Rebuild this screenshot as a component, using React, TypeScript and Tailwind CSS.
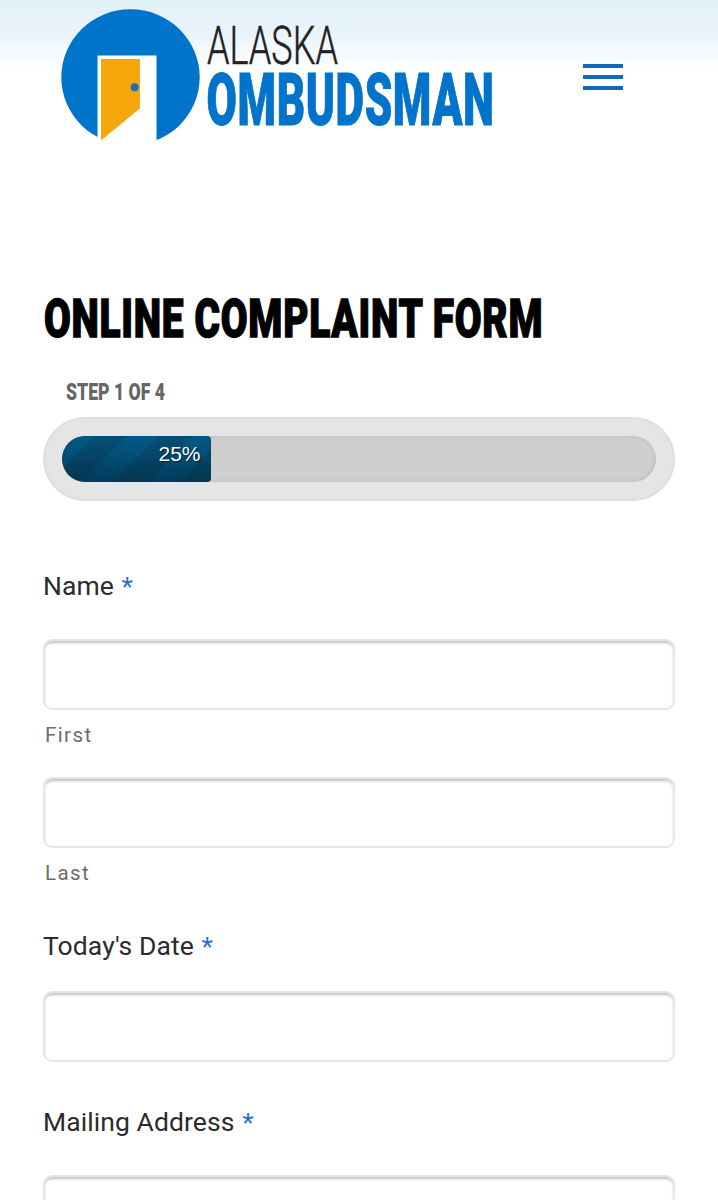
import React from "react";

function Logo() {
  return (
    <svg width="460" height="150" viewBox="58 4 460 150" role="img" aria-label="Alaska Ombudsman" className="overflow-visible">
      <ellipse cx="130.500" cy="77.300" rx="69.200" ry="68" fill="#0073cb" />
      <path d="M97.500 55.500h59V141l-1 8h-58z" fill="#fff" />
      <path d="M97.500 137L128 150L156.500 140.300V149H97.500Z" fill="#fff" />
      <path d="M101 59H140V108.300L101 140.500Z" fill="#f5a70a" />
      <circle cx="134.700" cy="87.300" r="4" fill="#1b6fb4" />
      <text x="207" y="63.500" textLength="131" lengthAdjust="spacingAndGlyphs" fill="#222" stroke="#222" strokeWidth="0.500" className="font-['Roboto',sans-serif] text-[53px] font-light">
        ALASKA
      </text>
      <text x="206.500" y="124.500" textLength="288" lengthAdjust="spacingAndGlyphs" fill="#0073cb" stroke="#0073cb" strokeWidth="1" className="font-['Roboto',sans-serif] text-[71.5px] font-black tracking-[1px]">
        OMBUDSMAN
      </text>
    </svg>
  );
}

function MenuButton() {
  return (
    <button aria-label="Menu" className="mt-[60px] flex h-[26px] w-10 flex-col justify-between">
      <span className="h-1 w-full bg-[#116bb8]" />
      <span className="h-1 w-full bg-[#116bb8]" />
      <span className="h-1 w-full bg-[#116bb8]" />
    </button>
  );
}

function Label({ children }: { children: string }) {
  return (
    <label className="block h-8 text-[26.5px] leading-[33px] tracking-[0.08px] text-[#2b2b2e]">
      {children} <span className="ml-px text-[#2a6fc4]">*</span>
    </label>
  );
}

function Input() {
  return (
    <input className="block h-[71px] w-full rounded-[9px] border-2 border-[#e6e6e6] bg-white px-4 text-2xl shadow-[inset_0_3px_3px_-1px_#c0c0c0] outline-none" />
  );
}

function SubLabel({ children }: { children: string }) {
  return <div className="h-6 pl-0.5 text-[20.5px] leading-[25px] tracking-[1.4px] text-[#6c6c6c]">{children}</div>;
}

export default function App() {
  return (
    <div className="h-[1200px] overflow-hidden bg-white font-['Roboto',sans-serif]">
      <header className="flex h-[297px] items-start justify-between bg-linear-to-b from-[#e3f1f8] from-0% via-[#e8f3fa] via-[10%] to-white to-[24%] pt-1 pr-[95px] pl-[58px]">
        <Logo />
        <MenuButton />
      </header>
      <main className="px-[43px]">
        <h1 className="ml-px h-10 origin-left scale-x-[0.713] text-[54.5px] leading-[42px] font-black tracking-[1px] whitespace-nowrap text-black [-webkit-text-stroke:1.4px_black]">
          ONLINE COMPLAINT FORM
        </h1>
        <h3 className="mt-[43px] ml-[23px] h-6 origin-left scale-x-[0.735] text-2xl leading-6 font-black whitespace-nowrap text-[#666]">
          STEP 1 OF 4
        </h3>
        <div className="mt-[13px] h-[84px] rounded-full border-2 border-[#dedede] bg-[#e5e5e5] px-[17px] py-[17px]">
          <div className="h-[46px] rounded-full bg-[#cfcfcf] shadow-[inset_0_0_4px_1px_#c0c0c0]">
            <div className="h-full w-1/4 rounded-l-[23px] rounded-r-[4px] bg-[linear-gradient(to_bottom,#00000000,#00000055),repeating-linear-gradient(135deg,#025a88_0,#025a88_23px,#065078_23px,#065078_46px)] pr-2.5 text-right font-['Liberation_Sans',sans-serif] text-[21px] leading-[36px] text-white shadow-[inset_0_0_2px_#00395a] text-shadow-[1px_1px_1px_#002030]">
              25%
            </div>
          </div>
        </div>
        <form>
          <div className="mt-[68px]">
            <Label>Name</Label>
            <div className="mt-[38px]">
              <Input />
            </div>
            <div className="mt-[13px]">
              <SubLabel>First</SubLabel>
            </div>
            <div className="mt-[30px]">
              <Input />
            </div>
            <div className="mt-[13px]">
              <SubLabel>Last</SubLabel>
            </div>
          </div>
          <div className="mt-[44px]">
            <Label>Today's Date</Label>
            <div className="mt-[30px]">
              <Input />
            </div>
          </div>
          <div className="mt-[43px]">
            <Label>Mailing Address</Label>
            <div className="mt-[38px]">
              <Input />
            </div>
          </div>
        </form>
      </main>
    </div>
  );
}
